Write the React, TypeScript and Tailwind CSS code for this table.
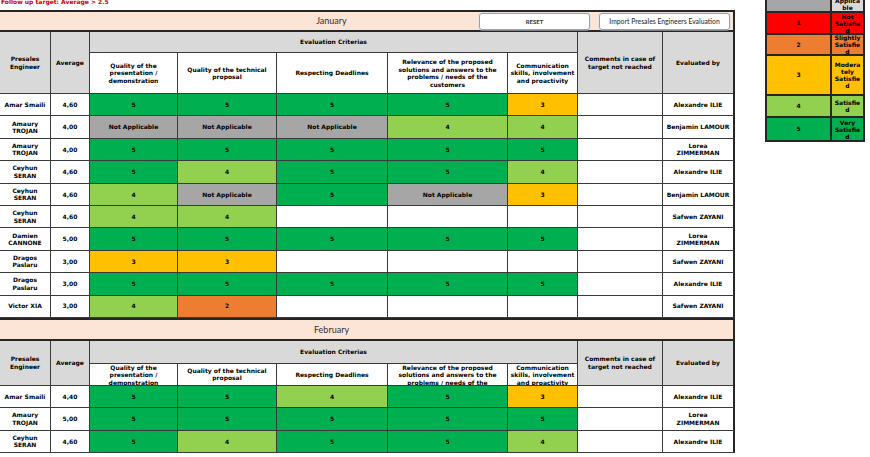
import React from "react";

type V = number | "NA" | null;

const COLS = "grid grid-cols-[51px_39px_88px_99px_111px_120px_70px_85px_72px]";
const LINE = "border-[#3a3a3a]";

function bgFor(v: V): string {
  if (v === "NA") return "bg-[#a6a6a6]";
  if (v === 5) return "bg-[#00b050]";
  if (v === 4) return "bg-[#92d050]";
  if (v === 3) return "bg-[#ffc000]";
  if (v === 2) return "bg-[#ed7d31]";
  if (v === 1) return "bg-[#ff0000]";
  return "bg-white";
}

type RowData = { name: string; avg: string; vals: V[]; by: string };

const jan: RowData[] = [
  { name: "Amar Smaili", avg: "4,60", vals: [5, 5, 5, 5, 3], by: "Alexandre ILIE" },
  { name: "Amaury TROJAN", avg: "4,00", vals: ["NA", "NA", "NA", 4, 4], by: "Benjamin LAMOUR" },
  { name: "Amaury TROJAN", avg: "4,00", vals: [5, 5, 5, 5, 5], by: "Lorea ZIMMERMAN" },
  { name: "Ceyhun SERAN", avg: "4,60", vals: [5, 4, 5, 5, 4], by: "Alexandre ILIE" },
  { name: "Ceyhun SERAN", avg: "4,60", vals: [4, "NA", 5, "NA", 3], by: "Benjamin LAMOUR" },
  { name: "Ceyhun SERAN", avg: "4,60", vals: [4, 4, null, null, null], by: "Safwen ZAYANI" },
  { name: "Damien CANNONE", avg: "5,00", vals: [5, 5, 5, 5, 5], by: "Lorea ZIMMERMAN" },
  { name: "Dragos Paslaru", avg: "3,00", vals: [3, 3, null, null, null], by: "Safwen ZAYANI" },
  { name: "Dragos Paslaru", avg: "3,00", vals: [5, 5, 5, 5, 5], by: "Alexandre ILIE" },
  { name: "Victor XIA", avg: "3,00", vals: [4, 2, null, null, null], by: "Safwen ZAYANI" },
];

const feb: RowData[] = [
  { name: "Amar Smaili", avg: "4,40", vals: [5, 5, 4, 5, 3], by: "Alexandre ILIE" },
  { name: "Amaury TROJAN", avg: "5,00", vals: [5, 5, 5, 5, 5], by: "Lorea ZIMMERMAN" },
  { name: "Ceyhun SERAN", avg: "4,60", vals: [5, 4, 5, 5, 4], by: "Alexandre ILIE" },
];

function Cell({ className = "", children }: { className?: string; children?: React.ReactNode }) {
  return (
    <div
      className={`flex items-center justify-center text-center border-r border-b ${LINE} overflow-hidden px-[3px] ${className}`}
    >
      <span className="max-w-[63px]">{children}</span>
    </div>
  );
}

function Row({ r }: { r: RowData }) {
  return (
    <div className={`${COLS} h-[22.4px]`}>
      <Cell className="bg-white">{r.name}</Cell>
      <Cell className="bg-white">{r.avg}</Cell>
      {r.vals.map((v, i) => (
        <Cell key={i} className={bgFor(v)}>
          <span className="whitespace-nowrap">{v === "NA" ? "Not Applicable" : v === null ? "" : String(v)}</span>
        </Cell>
      ))}
      <Cell className="bg-white" />
      <Cell className="bg-white border-r-2 border-r-[#262626] px-[2px]">{r.by}</Cell>
    </div>
  );
}

function MonthBar({ label, h, withButtons }: { label: string; h: string; withButtons?: boolean }) {
  return (
    <div className={`relative ${h} w-[735px] bg-[#fce4d6] border-t-2 border-b-2 border-r-2 border-[#262626] flex items-center`}>
      <div className="w-[663px] text-center font-['Lato',sans-serif] font-normal text-[9px] text-[#333]">{label}</div>
      {withButtons && (
        <>
          <div className="absolute left-[479px] top-[1px] w-[111px] h-[17px] bg-white border-[1.5px] border-[#8ea4bc] rounded-[3px] flex items-center justify-center font-['Lato',sans-serif] font-bold text-[6px] text-[#333] shadow-[0_0_0_0.5px_#d6dde6]">
            RESET
          </div>
          <div className="absolute left-[599px] top-[1px] w-[131px] h-[17px] bg-white border-[1.5px] border-[#8ea4bc] rounded-[3px] flex items-center justify-center font-['Lato',sans-serif] font-medium text-[6.8px] text-[#333] shadow-[0_0_0_0.5px_#d6dde6]">
            Import Presales Engineers Evaluation
          </div>
        </>
      )}
    </div>
  );
}

function Header({ rows }: { rows: string }) {
  const heads = [
    "Quality of the presentation / demonstration",
    "Quality of the technical proposal",
    "Respecting Deadlines",
    "Relevance of the proposed solutions and answers to the problems / needs of the customers",
    "Communication skills, involvement and proactivity",
  ];
  const pads = ["px-[3px]", "px-[3px]", "px-[3px]", "px-[7px]", "px-[2px]"];
  const hc = `flex justify-center text-center border-r border-b ${LINE} overflow-hidden [align-items:safe_center]`;
  return (
    <div className={`${COLS} ${rows}`}>
      <div className={`${hc} px-[3px] row-span-2 bg-[#d9d9d9]`}>
        <span>Presales Engineer</span>
      </div>
      <div className={`${hc} px-[2px] row-span-2 bg-[#d9d9d9]`}>
        <span>Average</span>
      </div>
      <div className={`${hc} px-[3px] col-span-5 bg-[#d9d9d9]`}>
        <span>Evaluation Criterias</span>
      </div>
      <div className={`${hc} px-[3px] row-span-2 bg-[#d9d9d9]`}>
        <span>Comments in case of target not reached</span>
      </div>
      <div className={`${hc} px-[3px] row-span-2 bg-[#d9d9d9] border-r-2 border-r-[#262626]`}>
        <span>Evaluated by</span>
      </div>
      {heads.map((t, i) => (
        <div key={i} className={`${hc} bg-white ${pads[i]}`}>
          <span>{t}</span>
        </div>
      ))}
    </div>
  );
}

function Legend() {
  const rows: { n: string; t: string; l: string; r: string; h: string; top?: boolean }[] = [
    { n: "", t: "Not Applicable", l: "bg-[#a6a6a6]", r: "bg-[#d9d9d9]", h: "h-[13px]", top: true },
    { n: "1", t: "Not Satisfied", l: "bg-[#ff0000]", r: "bg-[#ff0000]", h: "h-[22px]" },
    { n: "2", t: "Slightly Satisfied", l: "bg-[#ed7d31]", r: "bg-[#ed7d31]", h: "h-[21px]" },
    { n: "3", t: "Moderately Satisfied", l: "bg-[#ffc000]", r: "bg-[#ffc000]", h: "h-[40px]" },
    { n: "4", t: "Satisfied", l: "bg-[#92d050]", r: "bg-[#92d050]", h: "h-[22px]" },
    { n: "5", t: "Very Satisfied", l: "bg-[#00b050]", r: "bg-[#00b050]", h: "h-[22px]" },
  ];
  return (
    <div className="w-[100px] flex flex-col border-l-2 border-r-2 border-b-2 border-[#262626]">
      {rows.map((r, i) => (
        <div key={i} className={`grid grid-cols-[65px_31px] ${r.h}`}>
          <div
            className={`${r.l} flex items-center justify-center border-r-2 border-[#262626] ${
              i === 5 ? "" : "border-b-2"
            }`}
          >
            {r.n}
          </div>
          <div
            className={`${r.r} flex justify-center text-center px-[1.5px] overflow-hidden border-[#262626] ${
              r.top ? "items-end" : "items-center"
            } ${i === 5 ? "" : "border-b-2"}`}
          >
            <span className="break-words w-full leading-[7px]">{r.t}</span>
          </div>
        </div>
      ))}
    </div>
  );
}

export default function App() {
  return (
    <div className="w-[870px] h-[457px] overflow-hidden bg-white font-['DejaVu_Sans',sans-serif] font-bold text-[6px] leading-[7.5px] text-black">
      <div className="flex items-start gap-[30px]">
        <div className="w-[735px] flex flex-col">
          <div className="h-[12px] text-[#d00000] leading-[7px] -mt-[2px] pl-[1px]">Follow up target: Average &gt; 2.5</div>
          <MonthBar label="January" h="h-[22px]" withButtons />
          <Header rows="grid-rows-[21px_41px]" />
          {jan.map((r, i) => (
            <Row key={i} r={r} />
          ))}
          <MonthBar label="February" h="h-[23px]" />
          <Header rows="grid-rows-[23px_22px]" />
          {feb.map((r, i) => (
            <Row key={i} r={r} />
          ))}
        </div>
        <Legend />
      </div>
    </div>
  );
}
